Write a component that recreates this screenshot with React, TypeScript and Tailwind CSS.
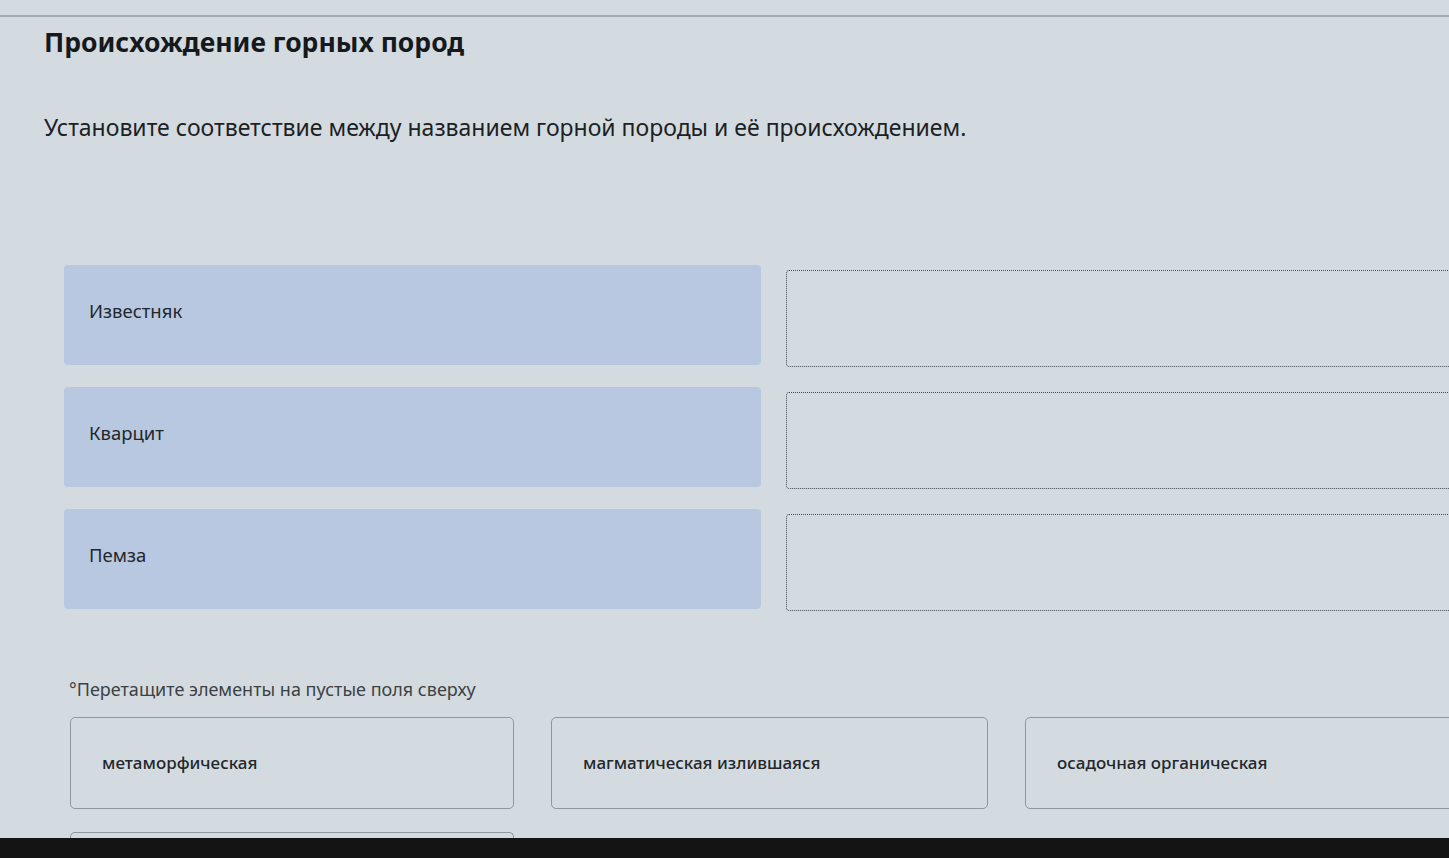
import React from 'react';

// Matching task: rock name -> origin, drag answers into the empty slots
const rocks = ['Известняк', 'Кварцит', 'Пемза'];
const answers = [
  { text: 'метаморфическая', width: 'w-[444px]' },
  { text: 'магматическая излившаяся', width: 'w-[437px]' },
  { text: 'осадочная органическая', width: 'w-[460px]' },
];

export default function App() {
  return (
    <div
      className="relative h-[858px] w-full overflow-hidden bg-[#d3dbe0] text-[#1c1f22]"
      style={{ fontFamily: '"Noto Sans", "Open Sans", sans-serif' }}
    >
      {/* top divider */}
      <div className="mt-[15px] h-[2px] w-full bg-[#a3acb1]" />

      <h1 className="mt-[9px] pl-[44px] text-[26.5px] font-bold leading-[32px] text-[#16191b]">
        Происхождение горных пород
      </h1>

      <p className="mt-[54px] pl-[44px] text-[23px] leading-[30px] text-[#1d2124]">
        Установите соответствие между названием горной породы и её происхождением.
      </p>

      {/* pairs */}
      <div className="mt-[123px] flex flex-col gap-[20px] pl-[64px]">
        {rocks.map((rock) => (
          <div key={rock} className="flex gap-[25px]">
            <div className="h-[100px] w-[697px] shrink-0 rounded-[4px] bg-[#b8c8e0] px-[25px] pt-[34px] text-[18.5px] leading-[24px] text-[#23272b]">
              {rock}
            </div>
            <div className="mt-[5px] h-[97px] w-[720px] shrink-0 rounded-[3px] border border-dotted border-[#464b4f]" />
          </div>
        ))}
      </div>

      <p className="mt-[67px] pl-[69px] text-[18px] leading-[22px] text-[#3c4144]">
        °Перетащите элементы на пустые поля сверху
      </p>

      {/* answer bank */}
      <div className="mt-[17px] flex gap-[37px] pl-[70px]">
        {answers.map((answer) => (
          <div
            key={answer.text}
            className={`flex h-[92px] shrink-0 items-center rounded-[5px] border border-[#8f979c] px-[31px] text-[17px] font-medium text-[#23272b] ${answer.width}`}
          >
            {answer.text}
          </div>
        ))}
      </div>
      <div className="ml-[70px] mt-[23px] h-[8px] w-[444px] rounded-t-[5px] border-x border-t border-[#8f979c]" />

      {/* monitor bezel */}
      <div className="absolute bottom-0 left-0 h-[20px] w-full bg-[#141414]" />
    </div>
  );
}
